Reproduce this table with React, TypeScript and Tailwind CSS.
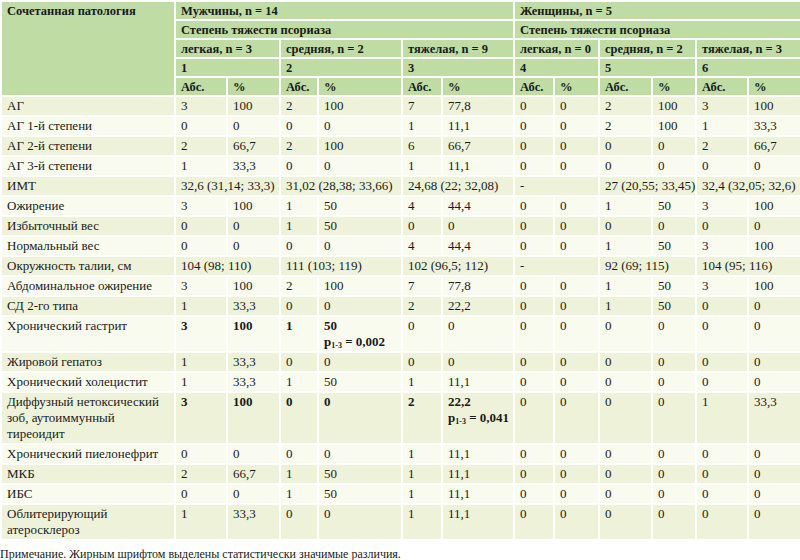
type Cell = { v: string; bold?: boolean; p?: string; span?: number }
type Row = { name: string[]; cells: Cell[] }

const c = (s: string): Cell[] => s.split(' ').map(v => ({ v }))
const b = (v: string, p?: string): Cell => ({ v, bold: true, p })
const m = (...vals: string[]): Cell[] => vals.map(v => ({ v, span: 2 }))

const ROWS: Row[] = [
  { name: ['АГ'], cells: c('3 100 2 100 7 77,8 0 0 2 100 3 100') },
  { name: ['АГ 1-й степени'], cells: c('0 0 0 0 1 11,1 0 0 2 100 1 33,3') },
  { name: ['АГ 2-й степени'], cells: c('2 66,7 2 100 6 66,7 0 0 0 0 2 66,7') },
  { name: ['АГ 3-й степени'], cells: c('1 33,3 0 0 1 11,1 0 0 0 0 0 0') },
  { name: ['ИМТ'], cells: m('32,6 (31,14; 33,3)', '31,02 (28,38; 33,66)', '24,68 (22; 32,08)', '-', '27 (20,55; 33,45)', '32,4 (32,05; 32,6)') },
  { name: ['Ожирение'], cells: c('3 100 1 50 4 44,4 0 0 1 50 3 100') },
  { name: ['Избыточный вес'], cells: c('0 0 1 50 0 0 0 0 0 0 0 0') },
  { name: ['Нормальный вес'], cells: c('0 0 0 0 4 44,4 0 0 1 50 3 100') },
  { name: ['Окружность талии, см'], cells: m('104 (98; 110)', '111 (103; 119)', '102 (96,5; 112)', '-', '92 (69; 115)', '104 (95; 116)') },
  { name: ['Абдоминальное ожирение'], cells: c('3 100 2 100 7 77,8 0 0 1 50 3 100') },
  { name: ['СД 2-го типа'], cells: c('1 33,3 0 0 2 22,2 0 0 1 50 0 0') },
  { name: ['Хронический гастрит'], cells: [b('3'), b('100'), b('1'), b('50', '0,002'), ...c('0 0 0 0 0 0 0 0')] },
  { name: ['Жировой гепатоз'], cells: c('1 33,3 0 0 0 0 0 0 0 0 0 0') },
  { name: ['Хронический холецистит'], cells: c('1 33,3 1 50 1 11,1 0 0 0 0 0 0') },
  {
    name: ['Диффузный нетоксический', 'зоб, аутоиммунный', 'тиреоидит'],
    cells: [b('3'), b('100'), b('0'), b('0'), b('2'), b('22,2', '0,041'), ...c('0 0 0 0 1 33,3')],
  },
  { name: ['Хронический пиелонефрит'], cells: c('0 0 0 0 1 11,1 0 0 0 0 0 0') },
  { name: ['МКБ'], cells: c('2 66,7 1 50 1 11,1 0 0 0 0 0 0') },
  { name: ['ИБС'], cells: c('0 0 1 50 1 11,1 0 0 0 0 0 0') },
  { name: ['Облитерирующий', 'атеросклероз'], cells: c('1 33,3 0 0 1 11,1 0 0 0 0 0 0') },
]

const WIDTHS = [174, 52, 53, 38, 84, 40, 72, 40, 45, 53, 44, 52, 53]
const GRADES = ['легкая, n = 3', 'средняя, n = 2', 'тяжелая, n = 9', 'легкая, n = 0', 'средняя, n = 2', 'тяжелая, n = 3']

const th = 'border-2 border-white bg-[#bedca4] text-left align-top font-bold text-[12.5px] whitespace-nowrap px-[5px] pt-[1px] pb-0 leading-[16px]'
const td = 'border-2 border-white align-top whitespace-nowrap px-[5px] pt-[1px] pb-[1px] leading-[16px]'

export default function App() {
  return (
    <div className="w-[800px] bg-white text-[#1a1a1a] [font-family:Liberation_Serif,Times_New_Roman,serif]">
      <table className="w-[800px] table-fixed border-collapse text-[13px]">
        <colgroup>
          {WIDTHS.map((w, i) => (
            <col key={i} style={{ width: w }} />
          ))}
        </colgroup>
        <thead>
          <tr>
            <th rowSpan={5} className={th}>Сочетанная патология</th>
            <th colSpan={6} className={th}>Мужчины, n = 14</th>
            <th colSpan={6} className={th}>Женщины, n = 5</th>
          </tr>
          <tr>
            <th colSpan={6} className={th}>Степень тяжести псориаза</th>
            <th colSpan={6} className={th}>Степень тяжести псориаза</th>
          </tr>
          <tr>
            {GRADES.map((g, i) => (
              <th key={i} colSpan={2} className={th}>{g}</th>
            ))}
          </tr>
          <tr>
            {[1, 2, 3, 4, 5, 6].map(n => (
              <th key={n} colSpan={2} className={th}>{n}</th>
            ))}
          </tr>
          <tr>
            {GRADES.map((_, i) => [
              <th key={`a${i}`} className={th}>Абс.</th>,
              <th key={`p${i}`} className={th}>%</th>,
            ])}
          </tr>
        </thead>
        <tbody>
          {ROWS.map((row, ri) => (
            <tr key={ri} className={ri % 2 === 0 ? 'bg-[#eef2d9]' : 'bg-[#f9fbef]'}>
              <td className={td}>
                {row.name.map((l, i) => (
                  <div key={i}>{l}</div>
                ))}
              </td>
              {row.cells.map((cell, ci) => (
                <td key={ci} colSpan={cell.span} className={`${td} ${cell.bold ? 'font-bold' : ''}`}>
                  <div>{cell.v}</div>
                  {cell.p && (
                    <div>
                      p<sub className="text-[8px]">1-3</sub> = {cell.p}
                    </div>
                  )}
                </td>
              ))}
            </tr>
          ))}
        </tbody>
      </table>
      <p className="text-[12px] leading-[16px] mt-[5px]">
        Примечание. Жирным шрифтом выделены статистически значимые различия.
      </p>
    </div>
  )
}
